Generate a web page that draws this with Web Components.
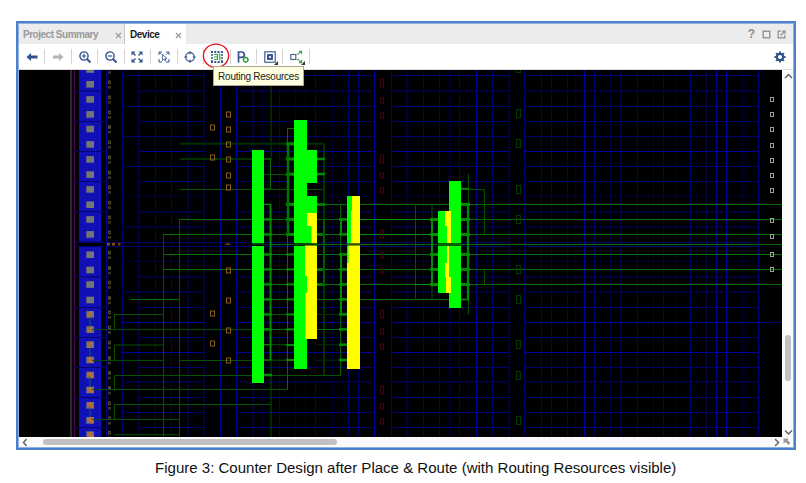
<!DOCTYPE html>
<html lang="en"><head><meta charset="utf-8"><title>Device view</title>
<style>
html,body{margin:0;background:#fff}
body{width:806px;height:483px;overflow:hidden;font-family:"Liberation Sans",Arial,sans-serif}
</style></head><body>
<device-figure></device-figure>
<script>
const def=(name,html,init)=>customElements.define(name,class extends HTMLElement{
  connectedCallback(){ if(this.shadowRoot) return;
    const r=this.attachShadow({mode:'open'});
    r.innerHTML=typeof html==='function'?html(this):html; if(init) init(this,r); }
});

/* Tool icons on a 14x14 grid */
const N='#34528a', G='#36a048';
const icons={
 back:`<path d="M1.5 7 6 3v2.6h6.5v2.8H6V11z" fill="${N}"/>`,
 fwd:`<path d="M12.5 7 8 3v2.6H2v2.8h6V11z" fill="#b4b4b4"/>`,
 zin:`<g fill="none" stroke="${N}"><circle cx="6" cy="6" r="4.1" stroke-width="1.4"/><path d="M9 9l3.5 3.5" stroke-width="2"/><path d="M3.8 6h4.4M6 3.8v4.4" stroke-width="1.2"/></g>`,
 zout:`<g fill="none" stroke="${N}"><circle cx="6" cy="6" r="4.1" stroke-width="1.4"/><path d="M9 9l3.5 3.5" stroke-width="2"/><path d="M3.8 6h4.4" stroke-width="1.2"/></g>`,
 fit:`<g stroke="${N}" stroke-width="1.3" fill="${N}"><path d="M2.5 2.5 5.5 5.5M11.5 2.5l-3 3M2.5 11.5l3-3M11.5 11.5l-3-3"/><path stroke="none" d="M1.5 1.5h4l-4 4zM12.500 1.500h-4l4 4zM1.500 12.500h4l-4-4zM12.500 12.500h-4l4-4z"/></g>`,
 sel:`<g fill="none" stroke="${N}"><path d="M2 5V2h3M9 2h3v3M2 9v3h3M12 9v3H9" stroke-width="1"/><path d="M5.500 4.500v6l1.500-1.500 1 2 1-.6-.9-1.800h1.900z" stroke-width=".8"/><path d="M2.500 2.500 4.500 4.500M11.500 2.500l-2 2" stroke-width=".8"/></g>`,
 target:`<g fill="none" stroke="${N}" stroke-width="1.200"><circle cx="7" cy="7" r="4.300"/><path d="M7 1.300v3M7 9.700v3M1.300 7h3M9.700 7h3"/></g>`,
 route:`<g fill="none"><path d="M1 2h12M1 12h12" stroke="${N}" stroke-width="2" stroke-dasharray="2 1.300"/><path d="M2 4v7M12 4v7" stroke="${N}" stroke-width="1.500" stroke-dasharray="2 1"/><path d="M4 4.500H7.500v5H4M4 7H7M9.800 3.500v7" stroke="${G}" stroke-width="1.200"/></g>`,
 pblock:`<path d="M2.500 12.500V2h3.200a2.600 2.600 0 0 1 0 5.300H2.500" fill="none" stroke="${N}" stroke-width="1.700"/><circle cx="9.700" cy="9.700" r="2.200" fill="#fff" stroke="${G}" stroke-width="1.400"/><path d="M9.700 6.500v1.500M9.700 11.500v1.500M6.500 9.700H8M11.500 9.700H13" stroke="${G}"/>`,
 chip:`<rect x="1.800" y="1.800" width="10.400" height="10.400" fill="none" stroke="${N}" stroke-width="1.100"/><rect x="4.600" y="4.600" width="4.800" height="4.800" fill="${N}" stroke="${N}"/><rect x="6" y="6" width="2" height="2" fill="#dbe3f2"/>`,
 expand:`<rect x="1.800" y="4.500" width="5" height="5" fill="none" stroke="#51668e" stroke-width="1.200"/><path d="M8.500 4.500 11.500 2M8.500 9l3 3" fill="none" stroke="${G}" stroke-width="1.600" stroke-dasharray="1.600 .8"/><path d="M10 1.500h2.500V4M10 12.500h2.500V10" fill="none" stroke="${G}" stroke-width="1.300"/>`,
 gear:`<g fill="none" stroke="${N}"><circle cx="7" cy="7" r="3.100" stroke-width="2.200"/><path d="M7 1.500v2M7 10.500v2M1.500 7h2M10.500 7h2M3.100 3.100 4.500 4.500M9.500 9.500l1.400 1.400M3.100 10.900 4.500 9.500M9.500 4.500l1.400-1.400" stroke-width="2"/></g>`
};
def('tool-button',e=>`<style>:host{display:flex;box-sizing:border-box;width:26.44px;height:15px;align-items:center;justify-content:center;border-right:1px solid #d4d4d4;position:relative;flex:none}
 :host([last]){border:0;width:22px}svg{width:14px;height:14px;display:block}i{position:absolute;right:4px;bottom:-1px;border:2px solid;border-color:transparent #333 #333 transparent}</style>
 <svg viewBox="0 0 14 14">${icons[e.getAttribute('icon')]}</svg>${e.hasAttribute('menu')?'<i></i>':''}`);

def('tool-strip',`<style>:host{display:flex;box-sizing:border-box;height:26px;background:#fff;border-bottom:1px solid #ddd;align-items:center;padding:0 2px 0 0}
 .gap{flex:1}</style>
 ${['back','fwd','zin','zout','fit','sel','target','route','pblock'].map(i=>`<tool-button icon="${i}"></tool-button>`).join('')}<tool-button icon="chip" menu></tool-button><tool-button icon="expand" menu></tool-button><span class="gap"></span><tool-button icon="gear" last></tool-button>`);

def('view-tab',`<style>:host{display:flex;box-sizing:border-box;height:20px;align-items:center;justify-content:space-between;font:bold 10px "Liberation Sans",Arial,sans-serif;letter-spacing:-.48px;color:#999;padding:0 2px 0 4px;width:106px;border-right:1px solid #c8c8c8}
 :host([active]){background:#fff;color:#1d1d1d;width:61px;border:0;padding:0 4px 0 5px} svg{width:7px;height:7px;margin-top:2px}</style><span><slot></slot></span><svg viewBox="0 0 7 7"><path d="M1 1l5 5M6 1 1 6" stroke="#999" stroke-width="1.100"/></svg>`);

def('tab-strip',`<style>:host{display:flex;height:20px;background:#ececec}.gap{flex:1}
 .w{display:flex;align-items:center;gap:6px;padding-right:7px;font:bold 12px "Liberation Sans",Arial,sans-serif;color:#8c8c8c}.w span{margin-right:1px}svg{width:9px;height:9px}</style>
 <view-tab>Project Summary</view-tab><view-tab active>Device</view-tab><span class="gap"></span>
 <div class="w"><span>?</span><svg viewBox="0 0 9 9"><rect x="1.200" y="1.200" width="6.600" height="6.600" fill="none" stroke="#8c8c8c" stroke-width="1.300"/></svg><svg viewBox="0 0 9 9"><path d="M4 1.200H1.200v6.600h6.600V5M3.500 5.500 7 2M5.200 1.200H8V4" fill="none" stroke="#8c8c8c" stroke-width="1.200"/></svg></div>`);

def('scroll-bar',e=>{const v=e.hasAttribute('vertical');return `<style>:host{display:flex;background:#fafafa;align-items:center;flex-direction:${v?'column':'row'}}
 svg{width:10px;height:10px;flex:none}.t{background:#c1c1c1;border-radius:3px;flex:none;${v?'width:6px;height:46px;margin-top:255px':'height:6px;width:294px;margin-left:14px;margin-top:0'}}.g{flex:1}</style>
 <svg viewBox="0 0 10 10"><path d="${v?'M2 8l3.500-3.500L9 8':'M7.500 2 4.500 5.500l3 3.500'}" fill="none" stroke="#666" stroke-width="1.500"/></svg><span class="t"></span><span class="g"></span>
 <svg viewBox="0 0 10 10"><path d="${v?'M2 3.500 5.500 7 9 3.500':'M3 2l3.500 3.500L3 9'}" fill="none" stroke="#666" stroke-width="1.500"/></svg>`});

/* Fabric drawing, in page pixels */
function fabric(){
 let o='';
 const R=(x,y,w,h,c)=>o+=`<rect x="${x}" y="${y}" width="${+w.toFixed(2)}" height="${+h.toFixed(2)}" fill="${c}"/>`;
 const H=(y,a,b,c,w=1)=>R(a,y-w/2,b-a,w,c), V=(x,a,b,c,w=1)=>R(x-w/2,a,w,b-a,c);
 const B=(x,y,w,h,c)=>o+=`<rect x="${x-w/2}" y="${y-h/2}" width="${w}" height="${h}" fill="none" stroke="${c}"/>`;
 const m='#000070',b='#00009a',d='#00003a';
 // blue interconnect grid
 [[106.5,b],[122.5,m],[138.5,d,2],[155.5,m],[171.5,m],[188,d,2],[204,d,2],[220.5,b],[236.5,b],[253,d,2],[262.5,d],[279.5,m],[295.5,d],[305.5,d],[315.5,m],[332.5,d],[348.5,m],[358.5,m],[374.5,b],[391.5,m],[407,d,2],[423.5,m],[439.5,m],[450.500,d],[459.500,m],[476.500,b],[492.500,m],[509,d,2],[524.500,m],[541.500,m],[551.500,m],[567.500,m],[575.500,d],[584.500,b],[594.500,m],[610.500,d],[621,d,2],[637.500,m],[653.500,d],[663.500,m],[675.500,d],[690.500,m],[706,d,2],[716.500,b],[726.500,b],[742.500,d],[758.500,m]].forEach(([x,c,w])=>V(x,70,437,c,w||1));
 const hs=[[75.5,m],[91,d,2],[106.500,m],[121.500,m],[136.500,m],[151.500,b],[166.500,m],[181.500,m],[196.500,d],[212,d,2],[227,d,2],[242.500,m],[246.500,m],[261.500,d],[277,d,2],[292,d,2],[307.500,m],[322.500,b],[337.500,m],[352.500,b],[367.500,m],[382,d,2],[397.500,m],[412.500,m],[427.500,m]];
 hs.forEach(([y,c,w],i)=>{w=w||1; const mid=y>240&&y<248, wide=(y<240)===(i%2==0);
  H(y,mid?74:(wide?122:139),204,c,w);
  if(mid){H(y,204,237,c)}
  H(y,236,375,c,w);H(y,391,509,c,w);if(mid)H(y,375,391,c);
  H(y,524,758.5,c,w);});
 H(322.5,758,782,m);
 // I/O bank column
 R(70,70,2,367,'#2b272e');V(74.5,70,437,'#520058');
 R(79,70,22.5,171.7,'#1010b6');R(79,247,22.5,190,'#1010b6');
 [91,121.5,151.5,181.5,211.5,276.8,307.5,337.5,367.5,397.5,427.5].forEach(y=>H(y,74,107,'#04046c'));
 const sq=[69.5,84.3,99.4,114.4,129,144.4,159.400,174.600,189.400,204.700,219.400,234.400,254.700,270,284.500,300,314.400,329.600,344.700,360,375,390,405.300,420.300,434.700];
 sq.forEach((y,i)=>{R(86.3,y-3.3,7.7,6.6,'#757575');
  B(109.5,y-2,2,2.6,'#54472a');B(109.5,y+3,2,1.6,'#3e3420');});
 const D='#045004',g='#006e00',k='#008c00',q='#003000';
 for(let y of [314.5,345,375.5,404.5]){ V(90,y,y+15,'#08605c');}
 sq.slice(16).forEach((y,i)=>o+=`<path d="${i<3?`M89.500 ${y-3}h2.500v3h-1.500v3h-2v-3h1z`:`M89 ${y-3}h2v3h2v3h-2.500v-2h-2z`}" fill="#d26a1c"/>`);
 R(107,243,3,2.500,'#8a4c0c');R(112,243,3,2.500,'#8a4c0c');R(118,243,2.500,2.500,'#70400c');
 // long routes on the left
 [[314.5,163.5],[345,163.5],[375.5,340.5],[404.5,271],[434.7,179.5]].forEach(([y,x])=>H(y,114.5,x,D));
 [[329.6,294],[360.4,163],[389.5,287.5],[419.5,179.5]].forEach(([y,x])=>H(y,92,x,D));
 [314.5,345,375.5,404.500].forEach(y=>V(114.5,y,y+15,D));
 H(299.5,130,179,g);H(360.500,179,252,D);
 V(163.5,234,437,D);V(179.5,219,437,D);
 H(143.7,179.500,324,q,2);H(159,179.500,252,q,2);H(189.5,179.5,324,D);H(219.5,179.5,294,g);H(234.5,163.5,294,g);H(254.5,163.5,252,g);H(269.5,163.5,252,g);
 H(174.5,264,294,D);V(271.2,70,160,q,1.5);V(271,360,437,D);
 V(287.5,128.5,389.5,g);H(128.5,287.5,294,g);
 V(324,143.7,375,q,2);V(340.6,204.5,375.5,g);
 V(415.5,204.500,299.500,D);V(432,204.500,299.500,q,2);V(468.500,174,314.500,D);
 H(189.500,461,484.500,D);V(484.500,189.500,234.500,D);V(484.500,269.500,284.500,D);
 // horizontal routes across the fabric
 [204.5,219.5,234.5].forEach(y=>H(y,317,782,g));[254.5,269.5,284.5].forEach(y=>H(y,264,782,g));
 H(244.500,270,782,g);H(299.5,264,449,g);H(329.5,264,347,g);
 [314.500,344.700,360.200].forEach(y=>{H(y,264,294,D);H(y,317,347,q)});
 H(219.5,360,438,k);H(234.5,360,438,k);H(284.5,414,438,k);
 // thick local buses
 const T=(ys,a,b2,w=2.5)=>ys.forEach(y=>H(y,a,b2,k,w));
 T([219.4,234.4,254.4,269.4,284.4,299.4,314.400,329.400,375],264,272);
 T([159,204.4,344.700,360],264,271,1.2);V(270.5,159,189.500,g);V(270.5,204,360,k,2);H(189,264,271,g);
 T([143.8,159,174.2,204.4,219.400,234.400],286,294,3);T([254.4,269.4,284.4,299.4,314.400,329.400,345,360],286,294,2);V(288,143,235,'#007400',2.5);
 T([159,174,204.500,234.500,269.500,284.500],317,325);V(324,219,285,'#005a00',2);
 T([219.4,234.4,254.4,269.4,284.4,299.4,314.400,329.400,344.700,360],339,347,2.500);V(341,219,235,k,2);V(341,254,314,k,2);
 T([219.500,234.500,254.400,269.400,284.600],430,438,3);V(432,219,285,k,2);
 T([204.400,219.500,234.500,254.400,269.400,284.500],461,470,3);T([188.700,299.500],461,469,1.6);V(468,204,300,k,2.2);
 // placed cells
 const L='#00ff00',Y='#ffff00';
 R(252,150,12,93.3,L);R(252,246,12,137,L);
 R(294,120,13,123.3,L);R(307,150,10,33,L);R(307,196,10,47.300,L);R(307,213,10,13,Y);R(311.500,226,5.500,17.300,Y);
 R(294,246,13,123,L);R(305,245,12,94,Y);R(305,276,2,17,L);R(305,293,.8,46,'#80ff00');
 R(347,196,13,47.500,Y);R(347,245,13,124,Y);R(347,196,5,15,L);R(347,211,4,32.300,L);R(347,245,1.500,18,L);
 R(449,181,12,127,L);R(438,211,11,82,L);R(445,211,6,15,Y);R(447,226,4,17,Y);R(447,246,2,17,Y);R(445,263,4,14,Y);R(446,277,5,16,Y);
 H(244.500,252,270,'#003000');H(244.6,294,317,'#004800',2);H(244.6,347,360,'#385000',2);H(244.500,438,461,'#006000',3);
 // site outlines
 [115,130,145,160,175.500,188,270.500,300.500,331,360.700].forEach(y=>B(228.500,Math.round(y)-.5,4,5,'#8a601c'));
 [128,158,314,344].forEach(y=>B(212.500,y-.5,4,5,'#8a601c'));R(225.500,243.300,4.500,1.700,'#704010');
 [[83,8],[100,5],[115,5],[159,8],[175,5],[190,5],[234,8],[255,5],[270,5],[314,8],[331,5],[346,5],[390,8],[406,5],[421,5]].forEach(([y,h])=>B(382,y+.5-(h==8?.500:0),3,h,'#460212'));
 [68,113.500,143.500,189.500,219.500,269.500,299.500,344.500,375.500,420.500].forEach(y=>B(518.5,Math.floor(y)+.5,4,8,'#003a00'));
 [99,114,129,145,160,175,190,220,236,254,269].forEach(y=>B(772,y+.5,3,4,'#a0a0a0'));
 return o;
}
def('device-canvas',()=>`<style>:host{display:block;width:763px;height:367px;background:#000}svg{display:block;width:763px;height:367px}</style><svg viewBox="19 70 763 367">${fabric()}</svg>`);

def('tool-tip',`<style>:host{display:flex;position:absolute;left:213px;top:66px;width:91px;height:20px;box-sizing:border-box;border:1px solid #aaa98f;background:#ffffe1;align-items:center;justify-content:center;font:10px "Liberation Sans",Arial,sans-serif;letter-spacing:-.25px;color:#222;white-space:nowrap}</style><slot></slot>`);

def('device-figure',`<style>:host{display:flex;flex-direction:column;width:806px;height:483px;position:relative}
 .frame{box-sizing:border-box;margin:21px 0 0 16px;width:780px;height:429px;border:2px solid #4c80cb;outline-offset:-3px;outline:1px solid #8fb1e2;border-width:2px 3px 3px;display:flex;flex-direction:column;padding-top:1px;background:#fff}
 .body{display:grid;grid-template-columns:763px 1fr;grid-template-rows:367px 1fr}
 .corner{width:10px;height:10px;display:block}
 .ring{position:absolute;left:201px;top:42px;width:30px;height:28px}
 .cap{margin:9px 0 0 155px;font-size:15.04px;line-height:18px;color:#111;white-space:nowrap}</style>
 <div class="frame"><tab-strip></tab-strip><tool-strip></tool-strip><div class="body"><device-canvas></device-canvas><scroll-bar vertical></scroll-bar><scroll-bar></scroll-bar>
 <svg class="corner" viewBox="0 0 10 10"><path d="M1.500 1.500H7L5.500 3 8.500 6 6.500 8 3.500 5 1.500 7z" fill="#999"/></svg></div></div>
 <div class="cap">Figure 3: Counter Design after Place &amp; Route (with Routing Resources visible)</div>
 <svg class="ring" viewBox="0 0 30 28"><ellipse cx="15" cy="13.700" rx="12.600" ry="11.600" fill="none" stroke="#e8141c" stroke-width="1.400"/></svg>
 <tool-tip>Routing Resources</tool-tip>`);
</script></body></html>
